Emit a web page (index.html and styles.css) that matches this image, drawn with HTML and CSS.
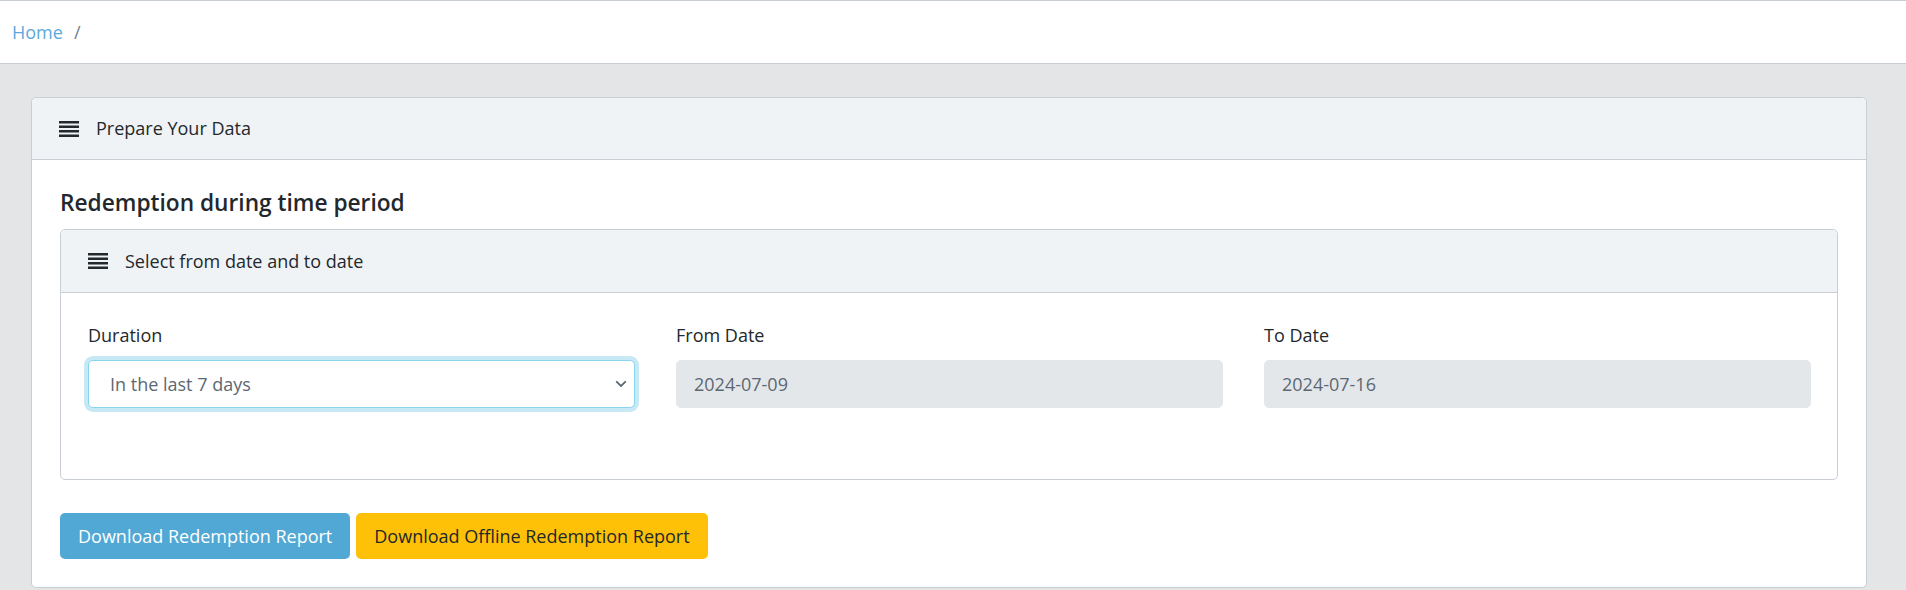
FILE: index.html
```html
<!DOCTYPE html>
<html lang="en">
<head>
<meta charset="utf-8">
<title>Redemption Report</title>
<link rel="stylesheet" href="styles.css">
</head>
<body>
<nav class="breadcrumb">
  <a class="crumb-link" href="#">Home</a>
  <span class="crumb-sep">/</span>
</nav>
<main class="main">
  <section class="card">
    <header class="card-header">
      <svg class="icon-justify" width="20" height="16" viewBox="0 0 20 16"><rect x="0" y="0" width="20" height="2.5"/><rect x="0" y="4.5" width="20" height="2.5"/><rect x="0" y="9" width="20" height="2.5"/><rect x="0" y="13.5" width="20" height="2.5"/></svg>
      <span>Prepare Your Data</span>
    </header>
    <div class="card-body">
      <h5 class="section-title">Redemption during time period</h5>
      <section class="card inner-card">
        <header class="card-header inner-header">
          <svg class="icon-justify" width="20" height="16" viewBox="0 0 20 16"><rect x="0" y="0" width="20" height="2.5"/><rect x="0" y="4.5" width="20" height="2.5"/><rect x="0" y="9" width="20" height="2.5"/><rect x="0" y="13.5" width="20" height="2.5"/></svg>
          <span>Select from date and to date</span>
        </header>
        <div class="inner-body">
          <div class="form-group">
            <label class="form-label" for="duration">Duration</label>
            <div class="select-wrap">
              <select id="duration" class="form-select">
                <option>In the last 7 days</option>
              </select>
              <svg class="chevron" width="12" height="8" viewBox="0 0 12 8"><path d="M1.2 1.3 L6 6 L10.8 1.3" fill="none" stroke="#5c6873" stroke-width="1.8"/></svg>
            </div>
          </div>
          <div class="form-group">
            <label class="form-label" for="from">From Date</label>
            <input id="from" class="form-input" type="text" value="2024-07-09" disabled>
          </div>
          <div class="form-group">
            <label class="form-label" for="to">To Date</label>
            <input id="to" class="form-input" type="text" value="2024-07-16" disabled>
          </div>
        </div>
      </section>
      <div class="actions">
        <button class="btn btn-info" type="button">Download Redemption Report</button>
        <button class="btn btn-warning" type="button">Download Offline Redemption Report</button>
      </div>
    </div>
  </section>
</main>
</body>
</html>
```
FILE: styles.css
```css
* { box-sizing: border-box; }

html, body {
  margin: 0;
  padding: 0;
}

body {
  background: #e4e5e6;
  color: #23282c;
  font-family: "Open Sans", "Noto Sans", sans-serif;
  font-size: 18px;
  line-height: 1.5;
}

.breadcrumb {
  display: flex;
  align-items: center;
  gap: 11px;
  height: 64px;
  padding: 1px 0 0 12px;
  background: #fff;
  border-top: 1px solid #c8ced3;
  border-bottom: 1px solid #c8ced3;
}

.crumb-link {
  color: #5ea9dc;
  text-decoration: none;
}

.crumb-sep {
  color: #73818f;
}

.main {
  padding: 33px 39px 0 31px;
}

.card {
  background: #fff;
  border: 1px solid #c8ced3;
  border-radius: 5px;
}

.card-header {
  display: flex;
  align-items: center;
  gap: 17px;
  height: 62px;
  padding: 0 27px;
  background: #f0f3f5;
  border-bottom: 1px solid #c8ced3;
  border-radius: 5px 5px 0 0;
}

.inner-header {
  height: 63px;
}

.icon-justify {
  display: block;
  fill: #23282c;
  flex: none;
}

.card-body {
  padding: 28px;
}

.section-title {
  margin: 0 0 11px;
  font-size: 22.7px;
  font-weight: 600;
  line-height: 30px;
  color: #23282c;
}

.inner-card {
  border-radius: 5px;
}

.inner-body {
  display: grid;
  grid-template-columns: 1fr 1fr 1fr;
  column-gap: 41px;
  padding: 28px 26px 71px 27px;
}

.form-label {
  display: block;
  line-height: 29px;
  margin-bottom: 10px;
}

.select-wrap {
  position: relative;
}

.form-select {
  display: block;
  width: 100%;
  height: 48px;
  padding: 0 40px 0 21px;
  font-family: inherit;
  font-size: 18px;
  color: #5c6873;
  background: #fff;
  border: 1px solid #8ad4ee;
  border-radius: 5px;
  box-shadow: 0 0 0 4px rgba(32, 168, 216, 0.25);
  appearance: none;
  -webkit-appearance: none;
  outline: none;
}

.chevron {
  position: absolute;
  right: 8px;
  top: 20px;
  pointer-events: none;
}

.form-input {
  display: block;
  width: 100%;
  height: 48px;
  padding: 0 17px;
  font-family: inherit;
  font-size: 18px;
  color: #5c6873;
  -webkit-text-fill-color: #5c6873;
  background: #e4e7ea;
  border: 1px solid #e4e7ea;
  border-radius: 5px;
  opacity: 1;
}

.actions {
  display: flex;
  gap: 6px;
  margin-top: 33px;
}

.btn {
  height: 46px;
  padding: 0 18px;
  font-family: inherit;
  font-size: 18px;
  border: none;
  border-radius: 5px;
  cursor: pointer;
}

.btn-info {
  background: #51a8d5;
  color: #fff;
}

.btn-warning {
  background: #ffc107;
  color: #23282c;
}
```
